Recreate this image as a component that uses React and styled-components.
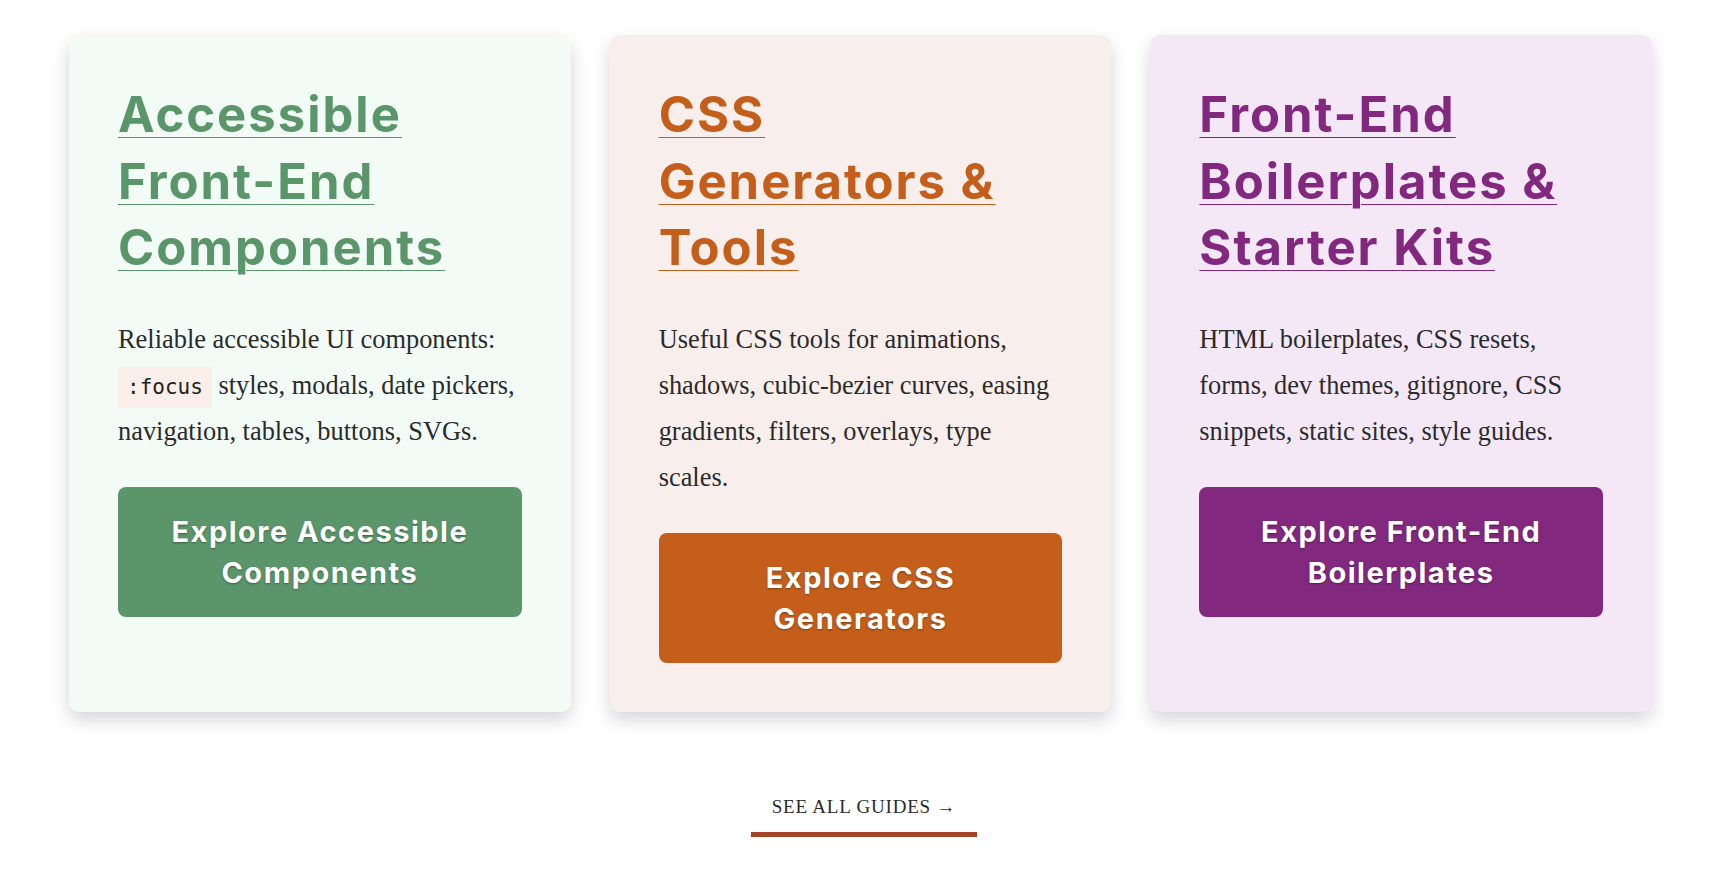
import styled, { createGlobalStyle } from 'styled-components';

const Global = createGlobalStyle`
  html, body { margin: 0; background: #fff; }
  body { font-family: "Liberation Serif", "DejaVu Serif", serif; }
`;

const Page = styled.main`
  padding: 35px 62px 40px 69px;
`;

const Grid = styled.div`
  display: grid;
  grid-template-columns: repeat(3, 1fr);
  gap: 39px;
`;

const Card = styled.article`
  background: ${p => p.bg};
  border-radius: 10px;
  box-shadow: 0 8px 18px rgba(50, 50, 70, 0.2);
  padding: 47px 49px 49px;
  display: flex;
  flex-direction: column;
  align-items: flex-start;
`;

const Title = styled.a`
  font-family: Inter, "Open Sans", sans-serif;
  font-weight: 700;
  font-size: 49px;
  line-height: 66.5px;
  letter-spacing: 2px;
  color: ${p => p.color};
  text-decoration: underline;
  text-decoration-thickness: 1px;
  text-underline-offset: 5px;
  margin: 0 0 34px;
  display: block;
`;

const Text = styled.p`
  margin: 0 0 33px;
  font-size: 26.4px;
  line-height: 46px;
  color: #2b2b2b;
`;

const Code = styled.code`
  display: inline-block;
  font-family: "DejaVu Sans Mono", "Liberation Mono", monospace;
  font-size: 21px;
  line-height: 41px;
  background: #f9efe8;
  padding: 0 9px;
  color: #222;
`;

const Button = styled.a`
  align-self: stretch;
  background: ${p => p.color};
  color: #fff;
  border-radius: 8px;
  padding: 24px 26px;
  text-align: center;
  font-family: Inter, "Open Sans", sans-serif;
  font-weight: 700;
  font-size: 29px;
  line-height: 41px;
  letter-spacing: 1.5px;
  text-decoration: none;
  text-shadow: 0 1px 2px rgba(0, 0, 0, 0.35);
`;

const Footer = styled.div`
  display: flex;
  justify-content: center;
  margin-top: 80px;
  padding-left: 7px;
`;

const AllLink = styled.a`
  font-size: 19px;
  letter-spacing: 0.8px;
  text-transform: uppercase;
  color: #2b2b2b;
  text-decoration: none;
  padding: 0 21px 10px;
  border-bottom: 5px solid #a5432a;
  line-height: 30px;
`;

const cards = [
  {
    title: 'Accessible Front-End Components',
    color: '#5a9669',
    bg: '#f2fbf6',
    text: (
      <>
        Reliable accessible UI components: <Code>:focus</Code> styles, modals, date pickers,
        navigation, tables, buttons, SVGs.
      </>
    ),
    button: 'Explore Accessible Components',
  },
  {
    title: 'CSS Generators & Tools',
    color: '#c45e1a',
    bg: '#f8efed',
    text: 'Useful CSS tools for animations, shadows, cubic-bezier curves, easing gradients, filters, overlays, type scales.',
    button: 'Explore CSS Generators',
  },
  {
    title: 'Front-End Boilerplates & Starter Kits',
    color: '#82287f',
    bg: '#f4e8f7',
    text: 'HTML boilerplates, CSS resets, forms, dev themes, gitignore, CSS snippets, static sites, style guides.',
    button: 'Explore Front-End Boilerplates',
  },
];

export default function App() {
  return (
    <>
      <Global />
      <Page>
        <Grid>
          {cards.map(c => (
            <Card key={c.title} bg={c.bg}>
              <Title href="#" color={c.color}>{c.title}</Title>
              <Text>{c.text}</Text>
              <Button href="#" color={c.color}>{c.button}</Button>
            </Card>
          ))}
        </Grid>
        <Footer>
          <AllLink href="#">See all guides →</AllLink>
        </Footer>
      </Page>
    </>
  );
}
